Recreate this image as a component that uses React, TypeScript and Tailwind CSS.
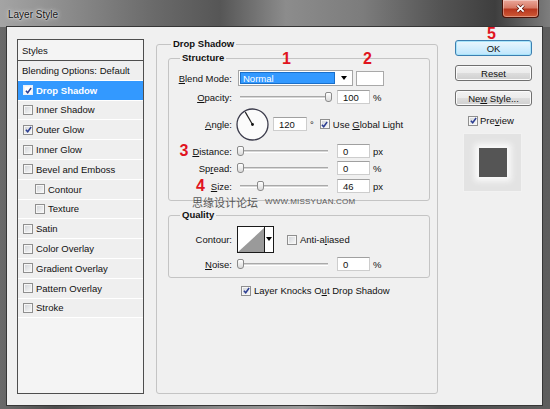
import React from "react";

const styles = [
  { name: "Inner Shadow" },
  { name: "Outer Glow", checked: true },
  { name: "Inner Glow" },
  { name: "Bevel and Emboss" },
  { name: "Contour", sub: true },
  { name: "Texture", sub: true },
  { name: "Satin" },
  { name: "Color Overlay" },
  { name: "Gradient Overlay" },
  { name: "Pattern Overlay" },
  { name: "Stroke" },
];

function Check({ checked = false, selected = false }: { checked?: boolean; selected?: boolean }) {
  return (
    <span
      className={`flex h-[10px] w-[10px] shrink-0 items-center justify-center border shadow-[inset_0_0_0_1px_#f6f6f6] ${
        selected ? "border-[#e8f0fb] bg-white" : "border-[#8f8f8f] bg-linear-to-br from-[#cfd2d6] to-[#fbfbfb]"
      }`}
    >
      {checked && (
        <svg viewBox="0 0 8 8" className="h-[7px] w-[7px]">
          <path d="M1 4.2 L3.1 6.6 L7 1.2" fill="none" stroke="#2b3d92" strokeWidth="1.7" />
        </svg>
      )}
    </span>
  );
}

function U({ children }: { children: React.ReactNode }) {
  return <span className="underline underline-offset-[1px]">{children}</span>;
}

function Label({ children }: { children: React.ReactNode }) {
  return <div className="flex w-[63px] shrink-0 items-center justify-end">{children}</div>;
}

function Red({ children, className = "" }: { children: React.ReactNode; className?: string }) {
  return <span className={`text-[16px] font-bold leading-none text-[#e0141e] ${className}`}>{children}</span>;
}

function Slider({ at }: { at: number }) {
  return (
    <div className="relative ml-[5px] h-[16px] w-[93px] shrink-0">
      <div className="absolute left-[3px] right-[2px] top-[7px] h-[3px] border-y border-t-[#a9a9a9] border-b-white bg-[#d6d6d6]" />
      <div
        className="absolute top-[3px] h-[10px] w-[7px] rounded-[2px] rounded-b-[3px] border border-[#8a8a8a] bg-linear-to-b from-white to-[#dadada]"
        style={{ left: at }}
      />
    </div>
  );
}

function Field({ value, unit, className = "ml-[7px] w-[33px]" }: { value: string; unit: string; className?: string }) {
  return (
    <>
      <div className={`flex h-[14px] shrink-0 items-center border border-[#cdcdcd] border-t-[#a0a0a0] bg-white pl-[5px] ${className}`}>
        {value}
      </div>
      <span className="ml-[3px]">{unit}</span>
    </>
  );
}

function Button({ children, primary = false }: { children: React.ReactNode; primary?: boolean }) {
  return (
    <div
      className={`flex h-[16px] w-[77px] shrink-0 items-center justify-center rounded-[3px] border ${
        primary
          ? "border-[#3c7fb1] bg-linear-to-b from-[#eaf6fd] to-[#bee6fd] shadow-[inset_0_0_0_1px_#a8e4fa]"
          : "border-[#707070] bg-[linear-gradient(180deg,#f2f2f2_0%,#ebebeb_50%,#dddddd_51%,#cfcfcf_100%)] shadow-[inset_0_0_0_1px_#fbfbfb]"
      }`}
    >
      {children}
    </div>
  );
}

function Dial() {
  return (
    <svg viewBox="0 0 33 33" className="ml-[4px] h-[33px] w-[33px] shrink-0">
      <circle cx="16.5" cy="16.5" r="15.5" fill="#fbfbfb" stroke="#3c3c4c" strokeWidth="1.3" />
      <line x1="16.5" y1="16.5" x2="9.3" y2="4.1" stroke="#222" strokeWidth="1.2" />
      <circle cx="16.5" cy="16.5" r="1.4" fill="#111" />
    </svg>
  );
}

function Triangle() {
  return <span className="h-0 w-0 border-x-[3px] border-t-[4px] border-x-transparent border-t-black" />;
}

export default function App() {
  return (
    <div className="relative flex h-[409px] w-[550px] flex-col overflow-hidden bg-[linear-gradient(90deg,#6a6a6a_0%,#4e4e4e_10%,#8a8a8a_40%,#9a9a9a_55%,#4a4a4a_80%,#5e5e5e_100%)] font-['Liberation_Sans',Arial,sans-serif] text-[9.5px] leading-[11px] text-[#111]">
      {/* title bar */}
      <div className="flex h-[27px] shrink-0 items-start bg-[linear-gradient(90deg,#a4a4a4_0%,#8c8c8c_12%,#6a6a6a_28%,#565656_40%,#8c8c8c_52%,#7c7c7c_66%,#545454_80%,#3e3e3e_90%,#7e7e7e_100%)]">
        <span className="pl-[8px] pt-[9px] text-[10px] leading-[12px] text-[#141414] [text-shadow:0_0_5px_#e8e8e8,0_0_2px_#fff]">
          Layer Style
        </span>
        <div className="ml-auto mr-[11px] flex h-[18px] w-[37px] items-center justify-center rounded-b-[4px] border border-t-0 border-[#4a1208] bg-[linear-gradient(180deg,#eba79a_0%,#d77a66_45%,#b8371f_55%,#cf5a36_100%)] shadow-[inset_0_0_0_1px_rgba(255,255,255,0.35)]">
          <svg viewBox="0 0 12 10" className="h-[9px] w-[11px]">
            <path d="M2.5 1.5 L9.5 8.5 M9.5 1.5 L2.5 8.5" stroke="#5a1208" strokeWidth="3.4" />
            <path d="M2.5 1.5 L9.5 8.5 M9.5 1.5 L2.5 8.5" stroke="#fff" strokeWidth="2" />
          </svg>
        </div>
      </div>

      {/* client area */}
      <div className="ml-[7px] flex h-[378px] w-[535px] shrink-0 items-start bg-[#f0f0f0] pl-[10px] pt-[12px] ring-1 ring-[#363636]">
        {/* styles list */}
        <div className="flex h-[355px] w-[127px] shrink-0 flex-col border border-[#4e4e4e] bg-[#f4f4f4]">
          <div className="flex h-[21px] shrink-0 items-center border-b border-[#4e4e4e] pl-[4px]">Styles</div>
          <div className="flex h-[19.8px] shrink-0 items-center border-b border-white bg-[#efefef] pl-[4px]">
            Blending Options: Default
          </div>
          <div className="flex h-[19.8px] shrink-0 items-center border-b border-white bg-[#3399ff] pl-[5px] font-bold text-white">
            <Check checked selected />
            <span className="ml-[3px]">Drop Shadow</span>
          </div>
          {styles.map((s) => (
            <div
              key={s.name}
              className={`flex h-[19.8px] shrink-0 items-center border-b border-white bg-[#efefef] ${s.sub ? "pl-[17px]" : "pl-[5px]"}`}
            >
              <Check checked={s.checked} />
              <span className="ml-[3px]">{s.name}</span>
            </div>
          ))}
        </div>

        {/* drop shadow group */}
        <fieldset className="-mt-px ml-[12px] h-[356px] w-[282px] shrink-0 rounded-[3px] border border-[#c4c4c4]">
          <legend className="ml-[14px] px-[2px] font-bold leading-[12px]">Drop Shadow</legend>

          <fieldset className="ml-[11px] mt-[2px] w-[262px] rounded-[3px] border border-[#c4c4c4] pb-[6px]">
            <legend className="ml-[11px] px-[2px] font-bold leading-[12px]">Structure</legend>
            <div className="flex flex-col pt-[6px]">
              <div className="flex h-[16px] items-center">
                <Label>
                  <U>B</U>lend Mode:
                </Label>
                <div className="ml-[6px] flex h-[16px] w-[115px] shrink-0 border border-[#a5a5a5] bg-white">
                  <div className="m-[1px] flex flex-1 items-center border border-[#1a6fc9] bg-[#3399ff] pl-[2px] text-white">Normal</div>
                  <div className="flex w-[16px] items-center justify-center">
                    <Triangle />
                  </div>
                </div>
                <div className="ml-[3px] h-[15px] w-[28px] shrink-0 border border-[#a9a9a9] bg-white" />
              </div>

              <div className="mt-[3px] flex h-[16px] items-center">
                <Label>
                  <U>O</U>pacity:
                </Label>
                <Slider at={88} />
                <Field value="100" unit="%" />
              </div>

              <div className="mt-[3px] flex h-[32px] items-center">
                <Label>
                  <U>A</U>ngle:
                </Label>
                <Dial />
                <Field value="120" unit="°" className="ml-[4px] w-[34px]" />
                <span className="ml-[6px]">
                  <Check checked />
                </span>
                <span className="ml-[3px]">
                  Use <U>G</U>lobal Light
                </span>
              </div>

              <div className="mt-[3px] flex h-[16px] items-center">
                <Label>
                  <Red className="mr-[4px]">3</Red>
                  <U>D</U>istance:
                </Label>
                <Slider at={0} />
                <Field value="0" unit="px" />
              </div>

              <div className="mt-[1px] flex h-[16px] items-center">
                <Label>
                  Sp<U>r</U>ead:
                </Label>
                <Slider at={0} />
                <Field value="0" unit="%" />
              </div>

              <div className="mt-[2px] flex h-[16px] items-center">
                <Label>
                  <Red className="mr-[6px]">4</Red>
                  <U>S</U>ize:
                </Label>
                <Slider at={20} />
                <Field value="46" unit="px" />
              </div>
            </div>
          </fieldset>

          <fieldset className="ml-[11px] mt-[8px] w-[262px] rounded-[3px] border border-[#c4c4c4] pb-[5px]">
            <legend className="ml-[11px] px-[2px] font-bold leading-[12px]">Quality</legend>
            <div className="flex flex-col">
              <div className="mt-[5px] flex h-[27px] items-center">
                <Label>Contour:</Label>
                <div className="ml-[5px] flex h-[27px] w-[37px] shrink-0 border border-[#1a1a1a] bg-white">
                  <svg viewBox="0 0 26 25" preserveAspectRatio="none" className="h-full w-[26px]">
                    <polygon points="0,25 26,1 26,25" fill="#9a9a9a" />
                  </svg>
                  <div className="flex flex-1 justify-center border-l border-[#1a1a1a] pt-[10px]">
                    <Triangle />
                  </div>
                </div>
                <span className="ml-[13px]">
                  <Check />
                </span>
                <span className="ml-[3px]">
                  Anti-a<U>l</U>iased
                </span>
              </div>
              <div className="mt-[3px] flex h-[16px] items-center">
                <Label>
                  <U>N</U>oise:
                </Label>
                <Slider at={0} />
                <Field value="0" unit="%" />
              </div>
            </div>
          </fieldset>

          <div className="ml-[84px] mt-[7px] flex h-[11px] items-center">
            <Check checked />
            <span className="ml-[3px]">
              Layer Knocks O<U>u</U>t Drop Shadow
            </span>
          </div>
        </fieldset>

        {/* buttons */}
        <div className="ml-[17px] mt-[1px] flex w-[77px] shrink-0 flex-col">
          <Button primary>OK</Button>
          <div className="mt-[9px]">
            <Button>Reset</Button>
          </div>
          <div className="mt-[9px]">
            <Button>
              <span>
                Ne<U>w</U> Style...
              </span>
            </Button>
          </div>
          <div className="ml-[13px] mt-[9px] flex h-[11px] items-center">
            <Check checked />
            <span className="ml-[2px]">
              Pre<U>v</U>iew
            </span>
          </div>
          <div className="ml-[8px] mt-[7px] flex h-[59px] w-[59px] items-center justify-center border border-[#f2f2f2] bg-[#e3e3e3]">
            <div className="h-[29px] w-[28px] bg-[#555] shadow-[0_0_6px_4px_#fbfbfb]" />
          </div>
        </div>
      </div>

      {/* annotations laid over the dialog */}
      <Red className="absolute left-[282px] top-[51px]">1</Red>
      <Red className="absolute left-[363px] top-[51px]">2</Red>
      <Red className="absolute left-[487px] top-[26px]">5</Red>
      <div className="absolute left-[192px] top-[196px] flex items-center text-[#585858]">
        <span className="font-['Noto_Sans_CJK_SC',sans-serif] text-[11px] leading-[12px]">思缘设计论坛</span>
        <span className="ml-[7px] text-[8px] leading-[12px] tracking-[0.2px]">WWW.MISSYUAN.COM</span>
      </div>
    </div>
  );
}
